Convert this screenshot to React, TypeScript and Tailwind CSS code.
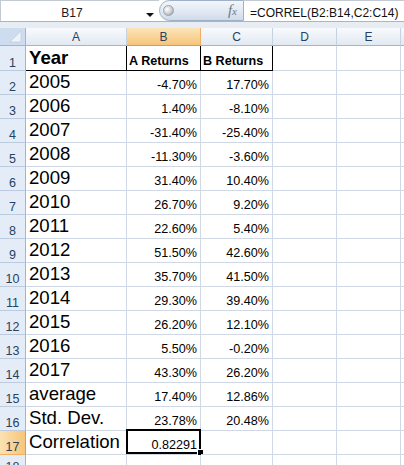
import React from "react";

const FONT = "font-['Liberation_Sans',Arial,sans-serif]";

type Col = { key: string; label: string; w: string };

const COLS: Col[] = [
  { key: "A", label: "A", w: "w-[101px]" },
  { key: "B", label: "B", w: "w-[74px]" },
  { key: "C", label: "C", w: "w-[72px]" },
  { key: "D", label: "D", w: "w-[64px]" },
  { key: "E", label: "E", w: "w-[64px]" },
  // next column only peeks in at the right edge
  { key: "F", label: "", w: "w-[64px]" },
];

type DataRow = { a: string; b?: string; c?: string };

const DATA: DataRow[] = [
  { a: "2005", b: "-4.70%", c: "17.70%" },
  { a: "2006", b: "1.40%", c: "-8.10%" },
  { a: "2007", b: "-31.40%", c: "-25.40%" },
  { a: "2008", b: "-11.30%", c: "-3.60%" },
  { a: "2009", b: "31.40%", c: "10.40%" },
  { a: "2010", b: "26.70%", c: "9.20%" },
  { a: "2011", b: "22.60%", c: "5.40%" },
  { a: "2012", b: "51.50%", c: "42.60%" },
  { a: "2013", b: "35.70%", c: "41.50%" },
  { a: "2014", b: "29.30%", c: "39.40%" },
  { a: "2015", b: "26.20%", c: "12.10%" },
  { a: "2016", b: "5.50%", c: "-0.20%" },
  { a: "2017", b: "43.30%", c: "26.20%" },
  { a: "average", b: "17.40%", c: "12.86%" },
  { a: "Std. Dev.", b: "23.78%", c: "20.48%" },
  { a: "Correlation", b: "0.82291" },
];

function RowHeader({ n, active }: { n: number; active?: boolean }) {
  return (
    <div
      className={`w-[26px] shrink-0 flex items-end justify-center pb-[1px] border-r border-b leading-none text-[12.5px] text-[#27415f] ${
        active
          ? "bg-linear-to-r from-[#fbe2b3] to-[#f6c57a] border-r-[#f29536] border-b-[#f2b062]"
          : "bg-[#e4ecf7] border-r-[#9eb6ce] border-b-[#bccbdd]"
      }`}
    >
      {n}
    </div>
  );
}

function FormulaBar() {
  return (
    <div className="flex h-[22px] bg-white border-b border-[#a7b5c7]">
      {/* name box */}
      <div className="relative w-[159px] shrink-0 flex items-end border-t border-l border-[#c3cad3]">
        <span className="w-[142px] text-center text-[12px] leading-none pb-[2px] text-[#1b1b1b]">B17</span>
        <svg className="absolute left-[145px] top-[12px]" width="8" height="4" viewBox="0 0 8 4">
          <polygon points="0,0 8,0 4,4" fill="#111" />
        </svg>
      </div>
      {/* function buttons strip */}
      <div className="relative w-[85px] shrink-0 h-[21px] rounded-l-full border border-[#9fb1c8] bg-linear-to-b from-[#f3f6fa] via-[#e3eaf3] to-[#cfdbea] flex items-center">
        <div className="ml-[3px] w-[11px] h-[11px] rounded-full border border-[#9aa3ad] bg-radial-[at_35%_35%] from-white via-[#d0d3d7] to-[#8d939a]" />
        <span className="absolute right-[6px] top-[2px] font-['Liberation_Serif',serif] italic text-[15px] leading-none text-[#707a86]">
          f<span className="text-[11px]">x</span>
        </span>
      </div>
      {/* formula input */}
      <div className="flex-1 flex items-end pl-[6px] border-t border-[#c3cad3]">
        <span className="text-[12px] leading-none pb-[2px] text-[#111] whitespace-nowrap">=CORREL(B2:B14,C2:C14)</span>
      </div>
    </div>
  );
}

function ColumnHeaders() {
  return (
    <div className="flex h-[18px]">
      <div className="w-[26px] shrink-0 border-r border-b border-[#9eb6ce] bg-[#dfe8f3]">
        <svg width="25" height="17" viewBox="0 0 25 17">
          <rect x="0" y="0" width="25" height="17" fill="#cddcee" />
          <polygon points="21,3 21,14 10,14" fill="#eef3f9" stroke="#b6c8de" strokeWidth="0.6" />
        </svg>
      </div>
      {COLS.map((c) => {
        const active = c.key === "B";
        return (
          <div
            key={c.key}
            className={`${c.w} shrink-0 flex items-center justify-center pt-[1px] border-r border-b leading-none text-[12px] text-[#27415f] ${
              active
                ? "bg-linear-to-b from-[#fbe4b8] to-[#f5c47a] border-r-[#f2b062] border-b-[#f29536]"
                : "bg-linear-to-b from-[#f8fafd] to-[#e2e9f2] border-r-[#c6d2e1] border-b-[#9eb6ce]"
            }`}
          >
            {c.label}
          </div>
        );
      })}
    </div>
  );
}

function Cell({
  w,
  children,
  className = "",
}: {
  w: string;
  children?: React.ReactNode;
  className?: string;
}) {
  return (
    <div className={`relative ${w} shrink-0 flex items-end border-r border-b border-[#d0d7e5] whitespace-nowrap ${className}`}>
      {children}
    </div>
  );
}

const BIG = "text-[18.6px] leading-none pl-[3px] pb-[2px] text-black";
const NUM = "w-full text-right text-[12.6px] leading-none pr-[3px] pb-[2px] text-black";
const TITLE = "text-[12.6px] font-bold leading-none pl-[2px] pb-[2px] text-black";

export default function App() {
  return (
    <div className={`${FONT} w-[404px] h-[465px] overflow-hidden bg-white select-none`}>
      <FormulaBar />
      <div className="h-[6px] bg-[#e8edf4]" />
      <ColumnHeaders />

      {/* row 1: column titles */}
      <div className="flex h-[25px]">
        <RowHeader n={1} />
        <Cell w={COLS[0].w} className="border-r-black border-b-black">
          <span className={`${BIG} font-bold`}>Year</span>
        </Cell>
        <Cell w={COLS[1].w} className="border-r-black border-b-black">
          <span className={TITLE}>A Returns</span>
        </Cell>
        <Cell w={COLS[2].w} className="border-r-black border-b-black">
          <span className={TITLE}>B Returns</span>
        </Cell>
        <Cell w={COLS[3].w} />
        <Cell w={COLS[4].w} />
        <Cell w={COLS[5].w} />
      </div>

      {DATA.map((r, i) => {
        const n = i + 2;
        const selected = n === 17;
        return (
          <div key={n} className="flex h-[24px]">
            <RowHeader n={n} active={selected} />
            <Cell w={COLS[0].w}>
              <span className={BIG}>{r.a}</span>
            </Cell>
            <Cell w={COLS[1].w}>
              <span className={NUM}>{r.b}</span>
              {selected && (
                <>
                  <div className="absolute left-[-1px] right-[-1px] top-[-2px] bottom-0 border-2 border-black pointer-events-none" />
                  <div className="absolute right-[-4px] bottom-[-2px] w-[7px] h-[7px] bg-black border border-white" />
                </>
              )}
            </Cell>
            <Cell w={COLS[2].w}>
              <span className={NUM}>{r.c}</span>
            </Cell>
            <Cell w={COLS[3].w} />
            <Cell w={COLS[4].w} />
            <Cell w={COLS[5].w} />
          </div>
        );
      })}

      <div className="flex h-[20px]">
        <RowHeader n={18} />
        <Cell w={COLS[0].w} />
        <Cell w={COLS[1].w} />
        <Cell w={COLS[2].w} />
        <Cell w={COLS[3].w} />
        <Cell w={COLS[4].w} />
        <Cell w={COLS[5].w} />
      </div>
    </div>
  );
}
